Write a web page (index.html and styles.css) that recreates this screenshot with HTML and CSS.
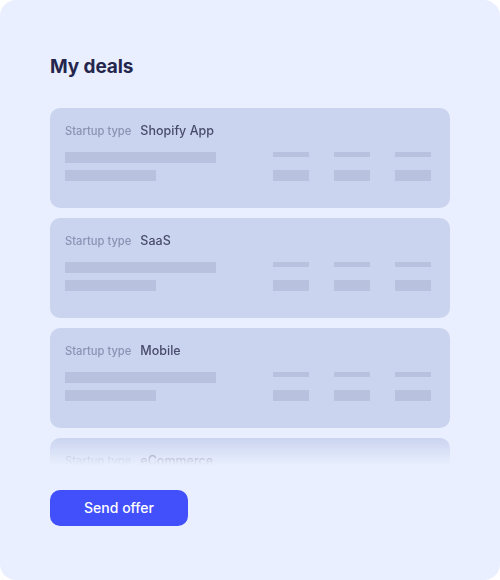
FILE: index.html
```html
<!DOCTYPE html>
<html>
<head>
<meta charset="utf-8">
<link rel="stylesheet" href="styles.css">
</head>
<body>
<div class="panel">
  <h1 class="title">My deals</h1>
  <div class="list">
    <div class="deal">
      <div class="deal-head"><span class="label">Startup type</span><span class="value">Shopify App</span></div>
      <div class="deal-body">
        <div class="left"><div class="bar long"></div><div class="bar short"></div></div>
        <div class="cols">
          <div class="col"><div class="thin"></div><div class="bar"></div></div>
          <div class="col"><div class="thin"></div><div class="bar"></div></div>
          <div class="col"><div class="thin"></div><div class="bar"></div></div>
        </div>
      </div>
    </div>
    <div class="deal">
      <div class="deal-head"><span class="label">Startup type</span><span class="value">SaaS</span></div>
      <div class="deal-body">
        <div class="left"><div class="bar long"></div><div class="bar short"></div></div>
        <div class="cols">
          <div class="col"><div class="thin"></div><div class="bar"></div></div>
          <div class="col"><div class="thin"></div><div class="bar"></div></div>
          <div class="col"><div class="thin"></div><div class="bar"></div></div>
        </div>
      </div>
    </div>
    <div class="deal">
      <div class="deal-head"><span class="label">Startup type</span><span class="value">Mobile</span></div>
      <div class="deal-body">
        <div class="left"><div class="bar long"></div><div class="bar short"></div></div>
        <div class="cols">
          <div class="col"><div class="thin"></div><div class="bar"></div></div>
          <div class="col"><div class="thin"></div><div class="bar"></div></div>
          <div class="col"><div class="thin"></div><div class="bar"></div></div>
        </div>
      </div>
    </div>
    <div class="deal">
      <div class="deal-head"><span class="label">Startup type</span><span class="value">eCommerce</span></div>
      <div class="deal-body">
        <div class="left"><div class="bar long"></div><div class="bar short"></div></div>
        <div class="cols">
          <div class="col"><div class="thin"></div><div class="bar"></div></div>
          <div class="col"><div class="thin"></div><div class="bar"></div></div>
          <div class="col"><div class="thin"></div><div class="bar"></div></div>
        </div>
      </div>
    </div>
  </div>
  <button class="btn">Send offer</button>
</div>
</body>
</html>
```

FILE: styles.css
```css
* { box-sizing: border-box; }
html, body { margin: 0; padding: 0; background: #ffffff; }
body { width: 500px; height: 580px; font-family: Inter, "Open Sans", sans-serif; }
.panel {
  width: 500px;
  height: 580px;
  background: #e9effe;
  border-radius: 16px;
  padding: 55px 50px 0 50px;
  display: flex;
  flex-direction: column;
  align-items: flex-start;
}
.title {
  margin: 0;
  font-size: 19px;
  line-height: 24px;
  font-weight: 700;
  color: #24264d;
  letter-spacing: -0.1px;
}
.list {
  margin-top: 29px;
  width: 400px;
  height: 357px;
  overflow: hidden;
  display: flex;
  flex-direction: column;
  gap: 10px;
  -webkit-mask-image: linear-gradient(to bottom, #000 0, #000 330px, rgba(0,0,0,0) 357px);
  mask-image: linear-gradient(to bottom, #000 0, #000 330px, rgba(0,0,0,0) 357px);
}
.deal {
  flex: 0 0 100px;
  height: 100px;
  background: #cad4ef;
  border-radius: 10px;
  padding: 15px 19px 0 15px;
}
.deal-head {
  display: flex;
  align-items: baseline;
  gap: 9px;
  height: 16px;
  line-height: 16px;
  white-space: nowrap;
}
.label { font-size: 11.2px; color: #8b92b3; font-weight: 500; letter-spacing: 0; }
.value { font-size: 12.5px; color: #474a6a; font-weight: 500; }
.deal-body {
  margin-top: 13px;
  display: flex;
  justify-content: space-between;
}
.left { display: flex; flex-direction: column; gap: 7px; }
.bar { background: #b8c1de; height: 11px; }
.long { width: 151px; }
.short { width: 91px; }
.cols { display: flex; gap: 25px; }
.col { width: 36px; display: flex; flex-direction: column; gap: 13px; }
.thin { background: #b8c1de; height: 5px; }
.btn {
  margin-top: 25px;
  width: 138px;
  height: 36px;
  border: none;
  border-radius: 10px;
  background: #4150fb;
  color: #ffffff;
  font-family: Inter, "Open Sans", sans-serif;
  font-size: 14px;
  font-weight: 500;
  padding: 0 0 2px 0;
}
```
